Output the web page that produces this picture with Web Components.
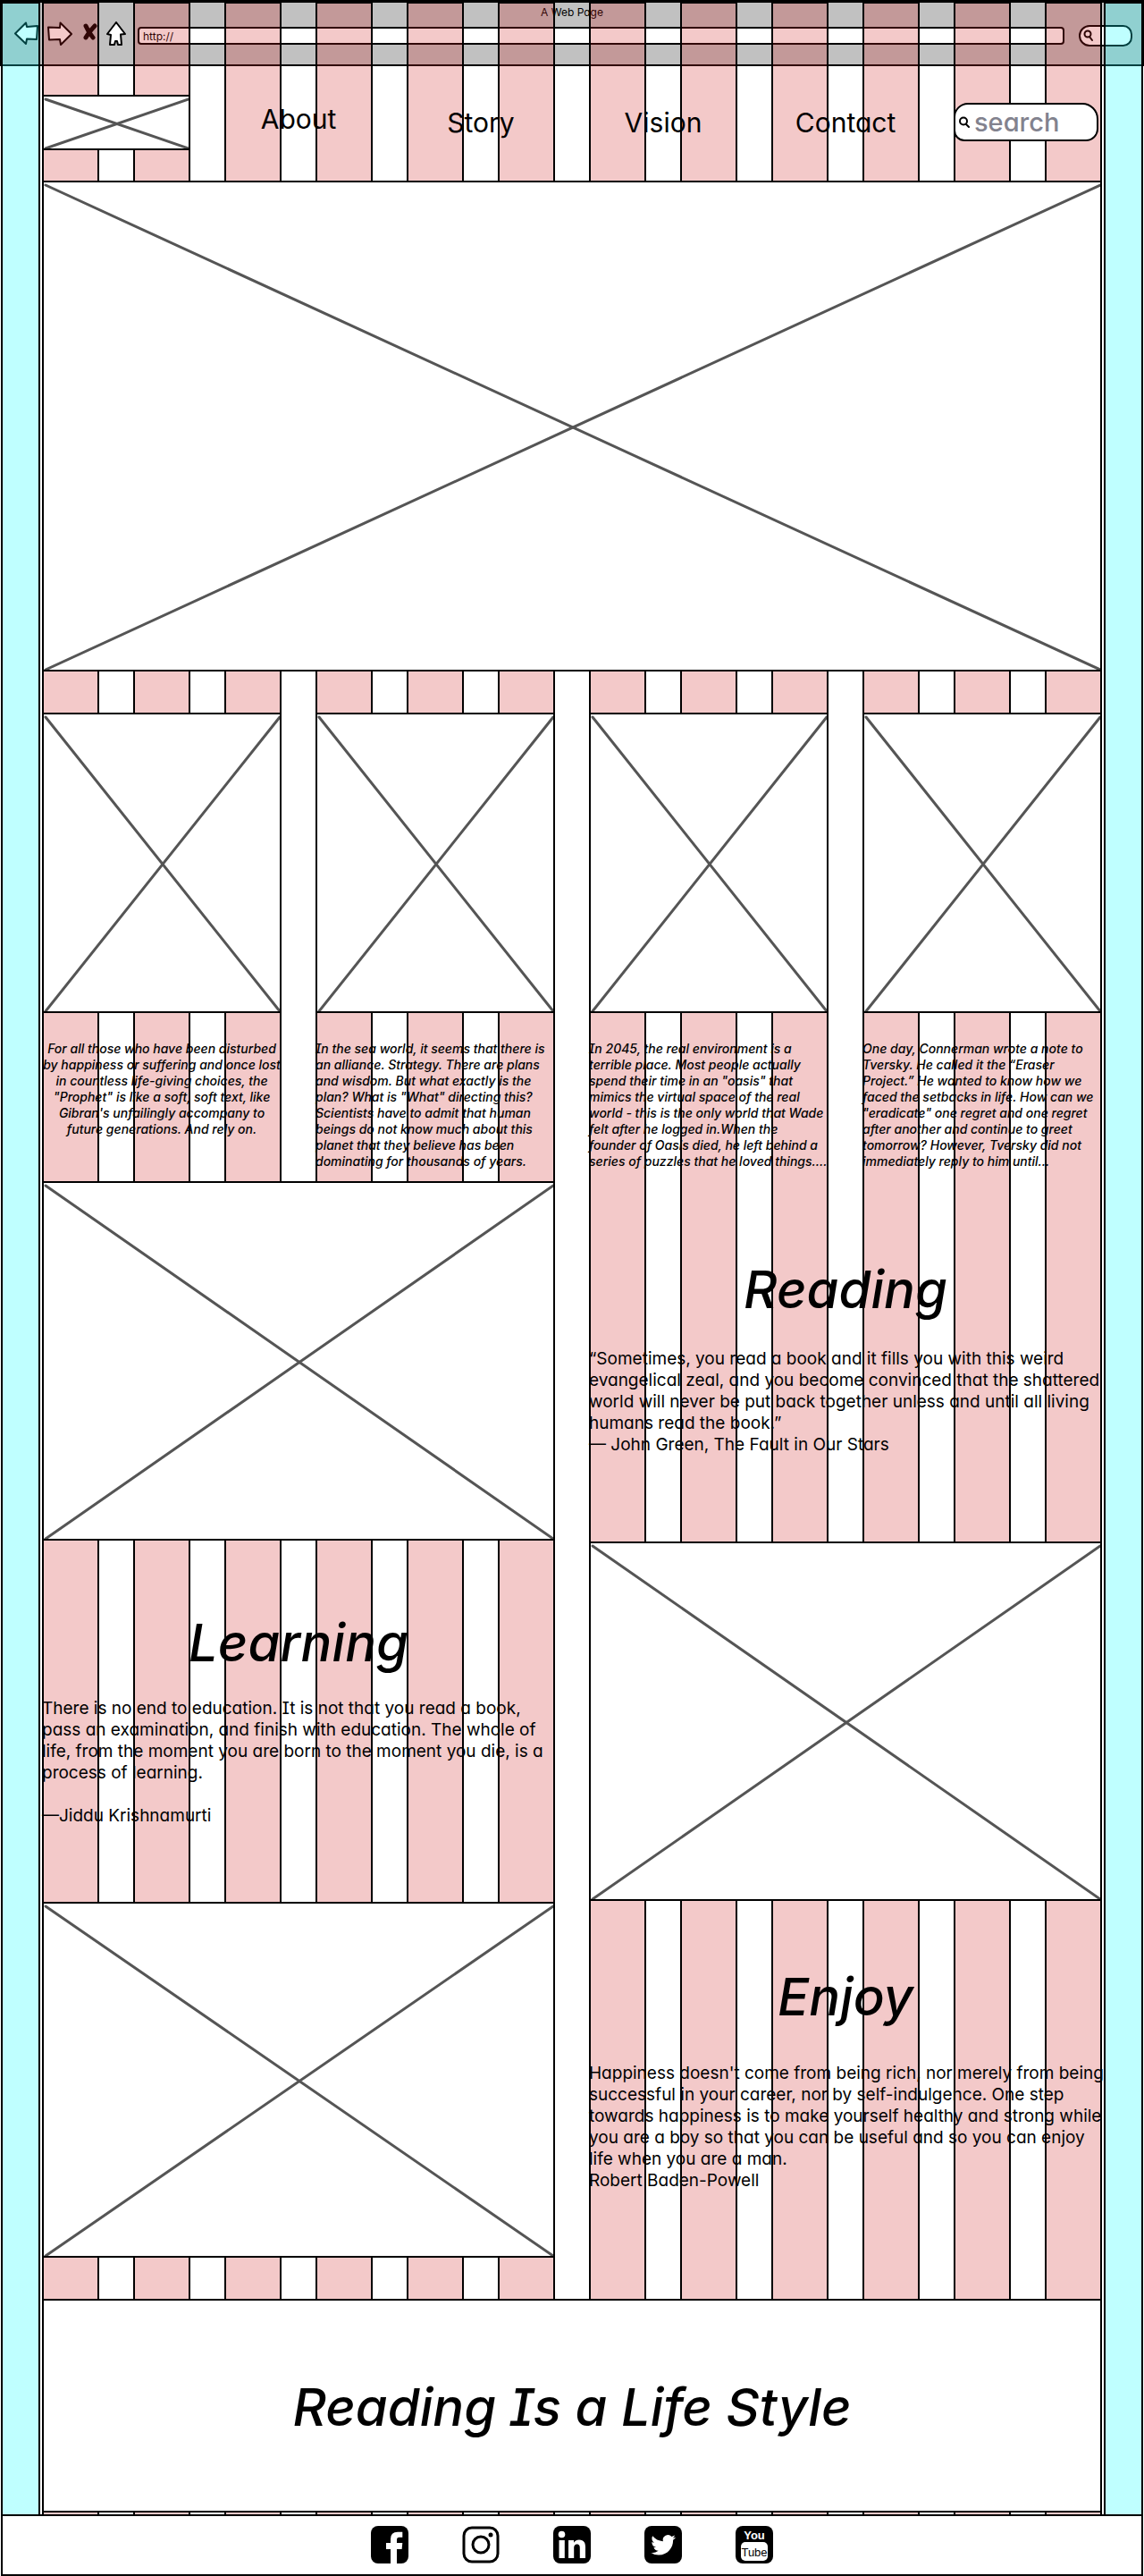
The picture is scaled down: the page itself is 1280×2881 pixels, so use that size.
<!DOCTYPE html>
<html lang="en">
<head>
<meta charset="utf-8">
<meta name="viewport" content="width=device-width, initial-scale=1">
<title>A Web Page</title>
<style>
  body {
    margin: 0;
    background: #fff;
    color: #000;
    font-family: Inter, "Open Sans", sans-serif;
    font-feature-settings: "cv11", "cv08";
  }
</style>
</head>
<body>
<wire-page>
  <browser-bar slot="chrome" heading="A Web Page" address="http://"></browser-bar>
  <column-guides slot="guides" count="12"></column-guides>

  <site-header slot="content"></site-header>
  <wire-image slot="content" style="--ratio: 1186 / 549" label="Hero image"></wire-image>

  <card-row slot="content">
    <story-card align="center">For all those who have been disturbed<br>by happiness or suffering and once lost<br>in countless life-giving choices, the<br>"Prophet" is like a soft, soft text, like<br>Gibran's unfailingly accompany to<br>future generations. And rely on.</story-card>
    <story-card>In the sea world, it seems that there is<br>an alliance. Strategy. There are plans<br>and wisdom. But what exactly is the<br>plan? What is "What" directing this?<br>Scientists have to admit that human<br>beings do not know much about this<br>planet that they believe has been<br>dominating for thousands of years.</story-card>
    <story-card>In 2045, the real environment is a<br>terrible place. Most people actually<br>spend their time in an "oasis" that<br>mimics the virtual space of the real<br>world - this is the only world that Wade<br>felt after he logged in.When the<br>founder of Oasis died, he left behind a<br>series of puzzles that he loved things....</story-card>
    <story-card>One day, Connerman wrote a note to<br>Tversky. He called it the “Eraser<br>Project.” He wanted to know how we<br>faced the setbacks in life. How can we<br>"eradicate" one regret and one regret<br>after another and continue to greet<br>tomorrow? However, Tversky did not<br>immediately reply to him until...</story-card>
  </card-row>

  <split-columns slot="content">
    <wire-image slot="left" style="--ratio: 574 / 402" label="Learning image"></wire-image>
    <quote-block slot="left" heading="Learning" style="--above: 78px; --between: 26px; --below: 84px">There is no end to education. It is not that you read a book,<br>pass an examination, and finish with education. The whole of<br>life, from the moment you are born to the moment you die, is a<br>process of learning.<br><br>—Jiddu Krishnamurti</quote-block>
    <wire-image slot="left" style="--ratio: 574 / 398" label="Library image"></wire-image>

    <quote-block slot="right" heading="Reading" style="--above: 85px; --between: 30px; --below: 96px">“Sometimes, you read a book and it fills you with this weird<br>evangelical zeal, and you become convinced that the shattered<br>world will never be put back together unless and until all living<br>humans read the book.”<br>— John Green, The Fault in Our Stars</quote-block>
    <wire-image slot="right" style="--ratio: 574 / 402" label="Reading image"></wire-image>
    <quote-block slot="right" heading="Enjoy" style="--above: 71px; --between: 38px; --below: 120px">Happiness doesn't come from being rich, nor merely from being<br>successful in your career, nor by self-indulgence. One step<br>towards happiness is to make yourself healthy and strong while<br>you are a boy so that you can be useful and so you can enjoy<br>life when you are a man.<br>Robert Baden-Powell</quote-block>
  </split-columns>

  <slogan-banner slot="content">Reading Is a Life Style</slogan-banner>
  <site-footer slot="footer"></site-footer>
</wire-page>

<script>
  const define = (name, html, setup) => {
    const template = document.createElement('template');
    template.innerHTML = html;
    customElements.define(name, class extends HTMLElement {
      constructor() {
        super();
        this.attachShadow({ mode: 'open' }).append(template.content.cloneNode(true));
      }
      connectedCallback() {
        if (setup) setup(this, this.shadowRoot);
      }
    });
  };

  /* Page frame: the guides share the grid cells of the browser bar and the content. */
  define('wire-page', `
    <style>
      :host { display: grid; grid-template-columns: minmax(0, 1fr); grid-template-rows: auto auto auto; }
      .chrome { grid-area: 1 / 1; }
      .guides { grid-area: 1 / 1 / 3 / 2; display: grid; z-index: 1; pointer-events: none; }
      main { grid-area: 2 / 1; z-index: 2; padding: 0 47px 2px; }
      .footer { grid-area: 3 / 1; }
    </style>
    <div class="chrome"><slot name="chrome"></slot></div>
    <div class="guides"><slot name="guides"></slot></div>
    <main><slot name="content"></slot></main>
    <div class="footer"><slot name="footer"></slot></div>
  `);

  define('browser-bar', `
    <style>
      :host { display: block; box-sizing: border-box; height: 74px; background: #c1c1c1; border: solid #000; border-width: 3px 2px 2px; }
      .title { margin: 0; font-size: 12px; line-height: 21px; text-align: center; }
      .bar { display: flex; align-items: center; height: 32px; padding: 0 11px 0 13px; }
      .tools { display: flex; align-self: flex-start; gap: 10px; margin-right: 13px; }
      button { display: block; padding: 0; border: 0; background: none; height: 28px; }
      svg { display: block; fill: #fff; stroke: #000; stroke-width: 2; stroke-linejoin: round; stroke-linecap: round; }
      input { font: inherit; font-feature-settings: inherit; box-sizing: border-box; border: 2px solid #000; background: #fff; outline: 0; color: #000; min-width: 0; }
      .url { flex: 1; height: 20px; padding: 0 4px; border-radius: 4px; font-size: 12px; margin-right: 16px; }
      .find { display: flex; align-items: center; box-sizing: border-box; width: 60px; height: 24px; padding-left: 3px; border: 2px solid #000; border-radius: 14px 12px 12px 14px; background: #fff; }
      .find svg { flex: none; fill: none; stroke-width: 2; }
      .find input { width: 30px; height: 16px; border: 0; padding: 0; background: none; }
    </style>
    <p class="title"></p>
    <div class="bar">
      <div class="tools">
        <button aria-label="Back"><svg width="28" height="28" viewBox="0 0 28 28"><path d="M2 13.500 14 1.500 15 6 27 5 26 20 15 19.500 14 25Z"/></svg></button>
        <button aria-label="Forward"><svg width="28" height="28" viewBox="0 0 28 28"><path d="M1 6.500 14 7 14.500 1.500 27 14 15 26 14 20 2 20.500Z"/></svg></button>
        <button aria-label="Stop"><svg width="18" height="28" viewBox="0 0 18 28" style="fill:none;stroke-width:5"><path d="M5 5Q8 12 13 18M15 5Q9 11 5 18"/></svg></button>
        <button aria-label="Home"><svg width="22" height="28" viewBox="0 0 22 28"><path d="M11 1 21 14 16 14.500 17 26 13 26 12 22 10 22 9 26 4 26 5 15 1 14Z"/></svg></button>
      </div>
      <input class="url" type="text" aria-label="Address">
      <label class="find"><svg width="12" height="14" viewBox="0 0 12 14"><circle cx="5" cy="5" r="3.500"/><path d="M7 8 10 12"/></svg><input type="text" aria-label="Browser search"></label>
    </div>
  `, (host, root) => {
    root.querySelector('.title').textContent = host.getAttribute('heading');
    root.querySelector('.url').value = host.getAttribute('address');
  });

  define('column-guides', `
    <style>
      :host { display: flex; gap: 2px; padding: 2px 1px 0; }
      .margin, .column { box-sizing: border-box; border: 2px solid #000; border-bottom: 0; }
      .margin { flex: none; width: 44px; background: rgba(0, 255, 255, .25); background-clip: padding-box; }
      .columns { flex: 1; display: flex; gap: 38px; }
      .column { flex: 1; background: rgba(204, 26, 26, .235); background-clip: padding-box; }
    </style>
    <div class="margin"></div><div class="columns"></div><div class="margin"></div>
  `, (host, root) => {
    const columns = root.querySelector('.columns');
    for (let i = 0; i < +host.getAttribute('count'); i++) {
      const column = document.createElement('div');
      column.className = 'column';
      columns.append(column);
    }
  });

  /* Image placeholder: a framed white box with its two diagonals. */
  define('wire-image', `
    <style>
      :host { display: block; box-sizing: border-box; aspect-ratio: var(--ratio); border: 2px solid #000; background: #fff; }
      svg { display: block; width: 100%; height: 100%; stroke: #555; stroke-width: 3; stroke-linecap: round; overflow: hidden; }
    </style>
    <svg role="img"><line x1="2" y1="3" x2="100%" y2="100%"/><line x1="2" y1="100%" x2="100%" y2="3"/></svg>
  `, (host, root) => root.querySelector('svg').setAttribute('aria-label', host.getAttribute('label') || 'Image'));

  define('site-header', `
    <style>
      :host { display: block; padding: 32px 0 34px; }
      header { display: grid; grid-template-columns: repeat(6, minmax(0, 1fr)); column-gap: 38px; align-items: center; }
      nav { display: contents; }
      a { color: inherit; text-decoration: none; font-size: 30px; line-height: 36px; text-align: center; }
      a.first, form { align-self: baseline; }
      form { display: flex; align-items: center; box-sizing: border-box; height: 43px; margin: 9px 4px 0 0; padding: 0 4px; gap: 5px; border: 2px solid #000; border-radius: 16px 18px 14px 12px; background: #fff; }
      form svg { flex: none; fill: none; stroke: #000; stroke-width: 2; stroke-linecap: round; }
      input { flex: 1; min-width: 0; width: 100%; height: 36px; padding: 0; border: 0; outline: 0; background: none; font: 500 29px/36px Inter, "Open Sans", sans-serif; font-feature-settings: "cv11", "cv08"; }
      input::placeholder { color: #82828e; opacity: 1; }
    </style>
    <header>
      <wire-image style="--ratio: 166 / 62" label="Logo"></wire-image>
      <nav>
        <a class="first" href="#about">About</a>
        <a href="#story">Story</a>
        <a href="#vision">Vision</a>
        <a href="#contact">Contact</a>
      </nav>
      <form role="search"><svg width="12" height="14" viewBox="0 0 12 14"><circle cx="5" cy="5.500" r="4"/><path d="M8 9 11 12"/></svg><input type="search" placeholder="search" aria-label="Search"></form>
    </header>
  `);

  define('card-row', `
    <style>:host { display: grid; grid-template-columns: repeat(4, minmax(0, 1fr)); gap: 38px; padding: 46px 0 13px; }</style>
    <slot></slot>
  `);

  define('story-card', `
    <style>
      :host { display: block; }
      p { margin: 31px 0 0; font-size: 14px; line-height: 18px; font-weight: 500; font-style: italic; white-space: nowrap; }
      :host([align="center"]) p { text-align: center; }
    </style>
    <wire-image style="--ratio: 268 / 336" label="Story image"></wire-image>
    <p><slot></slot></p>
  `);

  define('split-columns', `
    <style>
      :host { display: grid; grid-template-columns: repeat(2, minmax(0, 1fr)); column-gap: 38px; align-items: start; }
    </style>
    <div><slot name="left"></slot></div>
    <div><slot name="right"></slot></div>
  `);

  define('quote-block', `
    <style>
      :host { display: block; padding: var(--above) 0 var(--below); }
      h2 { margin: 0 0 var(--between); font-size: 58px; line-height: 72px; font-weight: 500; font-style: italic; text-align: center; }
      p { margin: 0; font-size: 19px; line-height: 24px; white-space: nowrap; }
    </style>
    <h2></h2>
    <p><slot></slot></p>
  `, (host, root) => { root.querySelector('h2').textContent = host.getAttribute('heading'); });

  define('slogan-banner', `
    <style>
      :host { display: block; border: 2px solid #000; background: #fff; padding: 83px 0 80px; }
      h1 { margin: 0; font-size: 58px; line-height: 72px; font-weight: 500; font-style: italic; text-align: center; }
    </style>
    <h1><slot></slot></h1>
  `);

  define('site-footer', `
    <style>
      :host { display: flex; justify-content: center; gap: 60px; margin: 0 1px; padding: 11px 0 12px; border: 2px solid #000; background: #fff; }
      a { display: block; width: 42px; height: 42px; color: #000; }
      svg { display: block; }
      .mark { fill: #fff; }
      .line { fill: none; stroke: #000; stroke-width: 3; }
      text { font-family: "Liberation Sans Narrow", "Liberation Sans", sans-serif; text-anchor: middle; }
    </style>
    <a href="#facebook" aria-label="Facebook"><svg width="42" height="42" viewBox="0 0 42 42"><rect width="42" height="42" rx="8"/><path class="mark" d="M22 42V26H17V19H22V14.500Q22 6.700 30 6.700H35.300V12.700H31.500Q29 12.700 29 15.500V19H35.300L34.600 26H29V42Z"/></svg></a>
    <a href="#instagram" aria-label="Instagram"><svg width="42" height="42" viewBox="0 0 42 42"><rect class="line" x="2" y="2" width="38" height="38" rx="9"/><circle class="line" cx="21" cy="21" r="9"/><circle cx="32" cy="10" r="2.500"/></svg></a>
    <a href="#linkedin" aria-label="LinkedIn"><svg width="42" height="42" viewBox="0 0 42 42"><rect width="42" height="42" rx="8"/><g class="mark"><circle cx="9.500" cy="9.500" r="3.800"/><path d="M6.500 16h6.300v20H6.500zM17 16h6v2.700c1-1.800 3-3.200 6-3.200 5.500 0 7 3.600 7 8.300V36h-6.200V25.500c0-2.600-.2-5-3.200-5s-3.400 2.400-3.400 5V36H17z"/></g></svg></a>
    <a href="#twitter" aria-label="Twitter"><svg width="42" height="42" viewBox="0 0 42 42"><rect width="42" height="42" rx="8"/><path class="mark" transform="translate(7.300 7.600) scale(1.150)" d="M23.953 4.570a10 10 0 01-2.825.775 4.958 4.958 0 002.163-2.723c-.951.555-2.005.959-3.127 1.184a4.920 4.920 0 00-8.384 4.482C7.690 8.095 4.067 6.130 1.640 3.162a4.822 4.822 0 00-.666 2.475c0 1.710.870 3.213 2.188 4.096a4.904 4.904 0 01-2.228-.616v.060a4.923 4.923 0 003.946 4.827 4.996 4.996 0 01-2.212.085 4.936 4.936 0 004.604 3.417 9.867 9.867 0 01-6.102 2.105c-.390 0-.779-.023-1.170-.067a13.995 13.995 0 007.557 2.209c9.053 0 13.998-7.496 13.998-13.985 0-.210 0-.420-.015-.630A9.935 9.935 0 0024 4.590z"/></svg></a>
    <a href="#youtube" aria-label="YouTube"><svg width="42" height="42" viewBox="0 0 42 42"><rect width="42" height="42" rx="8"/><rect class="mark" x="6" y="18" width="30" height="21" rx="5"/><text class="mark" x="21" y="15" font-size="13" font-weight="700">You</text><text x="21" y="34" font-size="13">Tube</text></svg></a>
  `);
</script>
</body>
</html>
